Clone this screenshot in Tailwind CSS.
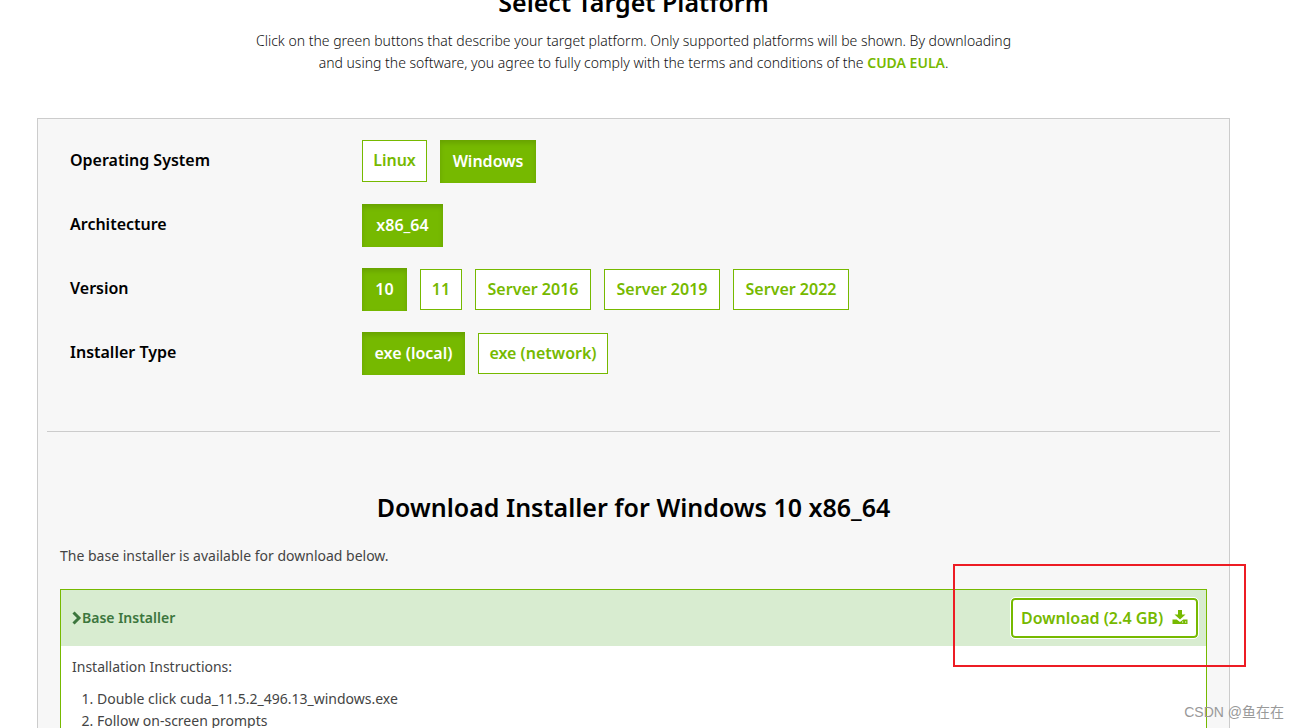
<!DOCTYPE html>
<html lang="en">
<head>
<meta charset="utf-8">
<meta name="viewport" content="width=device-width, initial-scale=1">
<title>CUDA Toolkit Downloads</title>
<script src="https://cdn.jsdelivr.net/npm/@tailwindcss/browser@4"></script>
</head>
<body class="relative h-screen overflow-hidden bg-white font-['Noto_Sans','Open_Sans',sans-serif] text-sm text-[#444444]">
<main class="-mt-3.5 pl-[37px] pr-[69px]">
  <header class="text-center">
    <h2 class="text-[25px] font-semibold leading-8 text-black">Select Target Platform</h2>
    <p class="mt-3 font-light leading-[22px] text-[#111111]">Click on the green buttons that describe your target platform. Only supported platforms will be shown. By downloading<br>and using the software, you agree to fully comply with the terms and conditions of the <a href="#eula" class="font-semibold text-[#76b900]">CUDA EULA</a>.</p>
  </header>

  <section class="mt-11 border border-[#cccccc] bg-[#f7f7f7] px-[9px] pt-[21px]">
    <div class="grid grid-cols-[292px_1fr] gap-y-[21px] border-b border-[#cccccc] pb-14 pl-[23px] text-base font-semibold leading-6 text-black">
      <h3 class="pt-2">Operating System</h3>
      <div class="flex items-start gap-[13px]" role="group" aria-label="Operating System">
        <button class="h-[42px] min-w-[65px] border border-[#76b900] bg-white px-2.5 pb-0.5 text-[#76b900]">Linux</button>
        <button class="h-[43px] min-w-[96px] bg-[#76b900] px-[11px] pb-0.5 text-white shadow-[inset_0_3px_5px_rgba(0,0,0,0.13)]">Windows</button>
      </div>
      <h3 class="pt-2">Architecture</h3>
      <div class="flex items-center gap-[13px]" role="group" aria-label="Architecture">
        <button class="h-[43px] min-w-[81px] bg-[#76b900] px-[11px] pb-0.5 text-white shadow-[inset_0_3px_5px_rgba(0,0,0,0.13)]">x86_64</button>
      </div>
      <h3 class="pt-2">Version</h3>
      <div class="flex items-center gap-[13px]" role="group" aria-label="Version">
        <button class="h-[43px] min-w-[45px] bg-[#76b900] px-[11px] pb-0.5 text-white shadow-[inset_0_3px_5px_rgba(0,0,0,0.13)]">10</button>
        <button class="h-[41px] min-w-[42px] border border-[#76b900] bg-white px-2.5 pb-0.5 text-[#76b900]">11</button>
        <button class="h-[41px] min-w-[116px] border border-[#76b900] bg-white px-2.5 pb-0.5 text-[#76b900]">Server 2016</button>
        <button class="h-[41px] min-w-[116px] border border-[#76b900] bg-white px-2.5 pb-0.5 text-[#76b900]">Server 2019</button>
        <button class="h-[41px] min-w-[116px] border border-[#76b900] bg-white px-2.5 pb-0.5 text-[#76b900]">Server 2022</button>
      </div>
      <h3 class="pt-2">Installer Type</h3>
      <div class="flex items-center gap-[13px]" role="group" aria-label="Installer Type">
        <button class="h-[43px] min-w-[103px] bg-[#76b900] px-[11px] pb-0.5 text-white shadow-[inset_0_3px_5px_rgba(0,0,0,0.13)]">exe (local)</button>
        <button class="h-[41px] min-w-[130px] border border-[#76b900] bg-white px-2.5 pb-0.5 text-[#76b900]">exe (network)</button>
      </div>
    </div>

    <div class="px-[13px] pt-[59px]">
      <h2 class="text-center text-[25px] font-semibold leading-8 text-black">Download Installer for Windows 10 x86_64</h2>
      <p class="mt-[22px] leading-[22px]">The base installer is available for download below.</p>
      <article class="mt-[22px] border border-[#76b900] bg-white">
        <div class="flex h-14 items-center justify-between bg-[#d8ecd0] pl-[11px] pr-2">
          <button class="flex items-center text-sm font-semibold text-[#3c763d]">
            <svg class="h-3.5 w-[10px]" viewBox="0 0 10 14" fill="none" stroke="currentColor" stroke-width="3" aria-hidden="true"><path d="M1.500 1.500 7 7l-5.500 5.500"/></svg>Base Installer
          </button>
          <a href="#download" class="flex h-10 min-w-[187px] items-center justify-between rounded border-2 border-[#76b900] bg-white px-2 text-base font-semibold text-[#76b900] outline outline-white">Download (2.4 GB)
            <svg class="mb-0.5 h-4 w-4" viewBox="0 0 16 16" fill="currentColor" aria-hidden="true"><path d="M6 1h4v4.500h3.500L8 10.500 2.500 5.500H6zM.5 10.500h4.200L8 13l3.300-2.500h4.200V15H.5zm9.500 2v1h1.200v-1zm3 0v1h1.200v-1z" fill-rule="evenodd"/></svg>
          </a>
        </div>
        <div class="px-[11px] pt-2.5 leading-[22px]">
          <p>Installation Instructions:</p>
          <ol class="mt-2.5 list-decimal pl-[25px]">
            <li>Double click cuda_11.5.2_496.13_windows.exe</li>
            <li>Follow on-screen prompts</li>
          </ol>
        </div>
      </article>
    </div>
  </section>
</main>
<div class="pointer-events-none absolute left-[953px] top-[564px] h-[103px] w-[293px] border-2 border-[#ed1c24]"></div>
<div class="absolute bottom-1 right-[15px] font-['Liberation_Sans','Noto_Sans_CJK_SC',sans-serif] text-sm leading-6 text-[#999999]">CSDN @鱼在在</div>
</body>
</html>
